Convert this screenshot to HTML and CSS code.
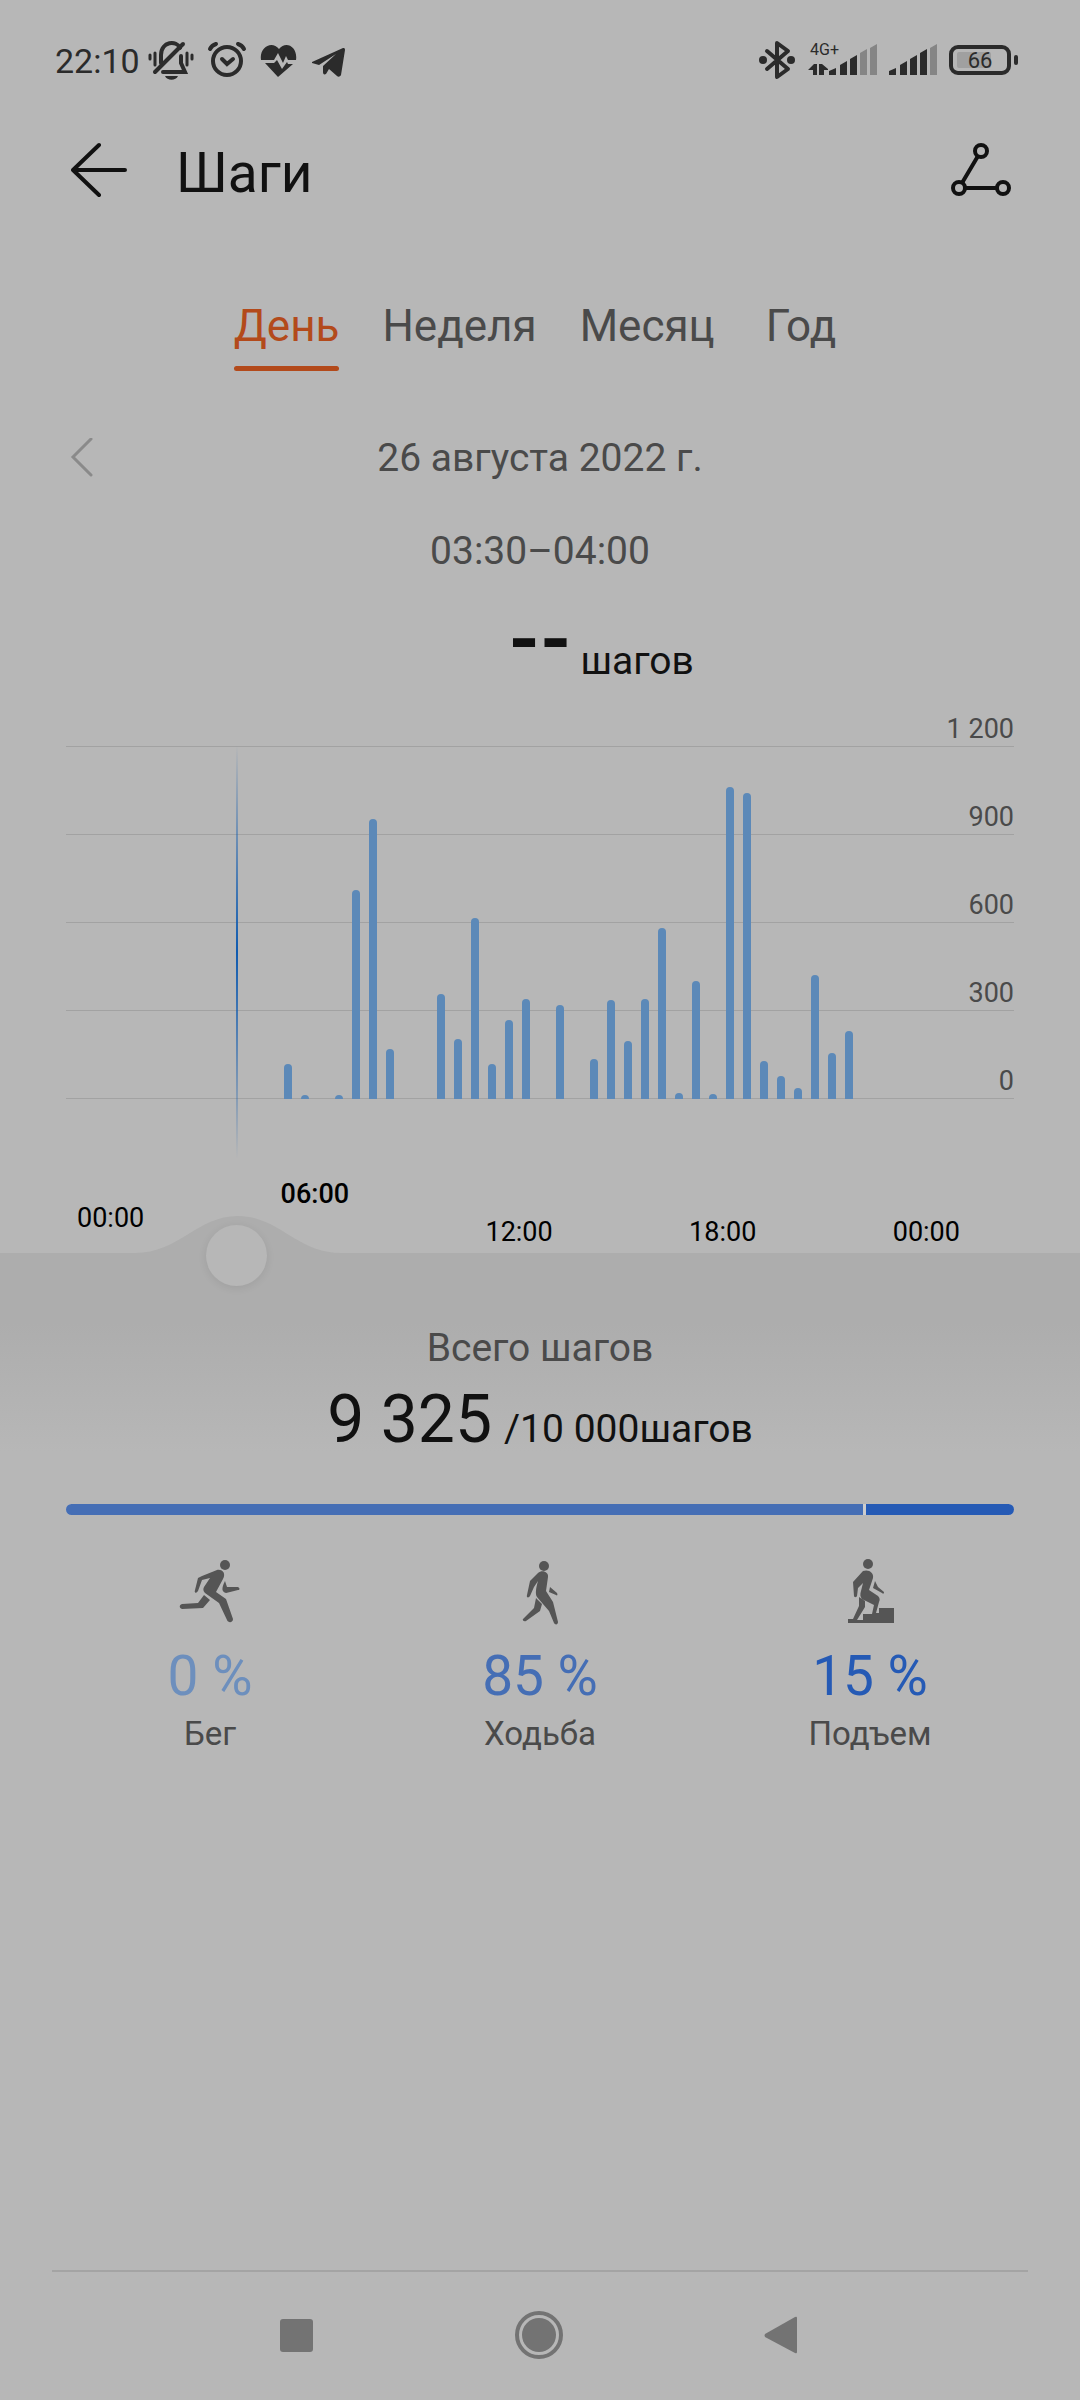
FILE: index.html
```html
<!DOCTYPE html>
<html lang="ru">
<head>
<meta charset="utf-8">
<meta name="viewport" content="width=device-width, initial-scale=1">
<title>Шаги</title>
<link rel="stylesheet" href="styles.css">
</head>
<body>
<div class="screen">
  <div class="status">
    <span class="clock">22:10</span>
    <svg class="status-icons" width="198" height="40" viewBox="0 0 198 40" aria-hidden="true">
      <g fill="none" stroke="#2b2b2b" stroke-width="4" stroke-linecap="round">
        <path d="M7 32 35 4"/><path d="M13 23V15c0-14 16-15 19-7M33 16v7l4 9H15"/>
        <path stroke-width="3" d="M2 15v4M7 13v12M39 13v12M44 15v4"/>
        <circle cx="79" cy="21" r="14"/><path d="m74 19 5 5 6-5"/>
        <path d="M62 9c1-2 3-4 6-5M90 4c3 1 5 3 6 5"/>
      </g>
      <path fill="#2b2b2b" d="M17 36h13c-2 5-11 5-13 0ZM113 20c-2-13 11-20 18-11 7-9 19-2 17 11h-8l-2-4-3 7-5-10-4 7ZM117 23h9l3-3 5 9 5-7 1 2h5l-15 13ZM164 22l31-14c1 0 2 0 2 2l-4 25c-1 2-3 2-4 1l-8-7-3 5c-2 1-3 0-3-2v-6l13-12-17 11-7-2Z"/>
    </svg>
    <svg class="status-right" width="260" height="44" viewBox="0 0 260 44" aria-hidden="true">
      <g fill="none" stroke="#2b2b2b" stroke-width="4" stroke-linejoin="round" stroke-linecap="round"><path d="m9 13 21 18-11 8V5l11 8L9 31"/></g>
      <circle cx="5" cy="22" r="4" fill="#2b2b2b"/><circle cx="33" cy="22" r="4" fill="#2b2b2b"/>
      <text class="network" x="52" y="17">4G+</text>
      <path fill="#2b2b2b" d="M50 32l6-6h3v11h-4v-5zM61 26h3l6 5v1h-4v5h-5zM71 37v-4l7-3v7zM82 37V27l7-4v14zM92 37V21l7-4v20zM131 37v-4l7-3v7zM142 37V27l7-4v14zM152 37V21l7-4v20zM162 37V15l7-4v26z"/>
      <path fill="#858585" d="M102 37V15l7-4v26zM112 37V10l7-4v31zM172 37V10l7-4v31z"/>
      <rect x="199" y="14" width="34" height="16" rx="2" fill="#a0a0a0"/>
      <rect x="193" y="9" width="58" height="26" rx="7" fill="none" stroke="#2b2b2b" stroke-width="4"/>
      <rect x="256" y="17" width="4" height="10" rx="2" fill="#2b2b2b"/>
      <text class="charge" x="222" y="30">66</text>
    </svg>
  </div>

  <header class="bar">
    <button class="icon-button" aria-label="Назад"><svg width="56" height="56" viewBox="0 0 56 56"><path d="M28 3 2 28l26 25M2 28h52" fill="none" stroke="#111" stroke-width="4" stroke-linecap="round" stroke-linejoin="round"/></svg></button>
    <h1 class="title">Шаги</h1>
    <button class="icon-button" aria-label="Поделиться"><svg width="62" height="56" viewBox="0 0 62 56"><g fill="none" stroke="#111" stroke-width="4"><circle cx="31" cy="9" r="6"/><circle cx="9" cy="46" r="6"/><circle cx="53" cy="46" r="6"/><path d="M28 14 12 41M15 46h32"/></g></svg></button>
  </header>

  <nav class="tabs">
    <button class="tab active">День</button>
    <button class="tab">Неделя</button>
    <button class="tab">Месяц</button>
    <button class="tab last">Год</button>
  </nav>

  <div class="date-row">
    <button class="icon-button" aria-label="Предыдущий день"><svg width="24" height="40" viewBox="0 0 24 40"><path d="M21 1 3 19l18 18" fill="none" stroke="#8a8a8a" stroke-width="3" stroke-linecap="round"/></svg></button>
    <span>26 августа 2022 г.</span>
  </div>
  <div class="time-range">03:30–04:00</div>
  <div class="reading"><b class="dashes">--</b><span class="unit">шагов</span></div>

  <section class="chart">
    <div class="grid-lines">
      <div class="line">1 200</div><div class="line">900</div><div class="line">600</div><div class="line">300</div><div class="line zero">0</div>
    </div>
    <div class="bars" id="bars"></div>
    <div class="hours">
      <span class="hour near">00:00</span><span class="hour top">06:00</span><span class="hour">12:00</span><span class="hour">18:00</span><span class="hour">00:00</span>
    </div>
  </section>

  <section class="summary">
    <svg class="hump" width="206" height="38" viewBox="0 0 206 38" aria-hidden="true"><path d="M0 37C44 37 62 0 103 0S162 37 206 37V38H0Z" fill="#adadad"/></svg>
    <input class="scrubber" type="range" min="0" max="47" value="7" aria-label="Время">
    <div class="caption">Всего шагов</div>
    <div class="total"><span class="count">9 325</span><span>/10 000шагов</span></div>
    <div class="split"><i class="walk" style="flex-grow:843"></i><i class="climb" style="flex-grow:157"></i></div>
    <div class="kinds">
      <div class="kind">
        <svg width="64" height="66" viewBox="0 0 64 66" aria-hidden="true"><g fill="#555"><circle cx="47" cy="6" r="5"/><path d="M24 17 39 11c6-1 9 4 6 9l-7 13 10 7 7 20c0 4-5 4-6 1l-8-17-14-10c-2-2-2-4-1-6l6-9-8 2-4 11c-2 3-4 2-3-1l3-12ZM47 22l2 6h11c2 1 2 3 0 3l-12 3c-4-1-5-4-1-12ZM26 36l6 5-7 8-21 1c-3-1-3-4 0-5l16-1Z"/></g></svg>
        <div class="share run-text">0 %</div><div class="name">Бег</div>
      </div>
      <div class="kind">
        <svg width="64" height="66" viewBox="0 0 64 66" aria-hidden="true"><g fill="#555"><circle cx="36" cy="7" r="5"/><path d="M22 22l8-8c4-4 11-1 10 4l-2 14 7 11 5 20c0 3-3 3-4 1l-5-12-12-14c-2-3-1-9 1-16l-4 6-4 9c-1 2-4 2-3-1ZM28 39l6 6-2 7-14 10c-2 1-4-1-3-2l11-11ZM42 28l7 6c1 2 0 3-1 2l-7-3Z"/></g></svg>
        <div class="share walk-text">85 %</div><div class="name">Ходьба</div>
      </div>
      <div class="kind">
        <svg width="64" height="66" viewBox="0 0 64 66" aria-hidden="true"><g fill="#555"><circle cx="30" cy="5" r="5"/><path d="m15 23 10-11c6-2 11 2 10 7l-4 12 9 6c2 2 2 4 1 6l-3 11h3v-5h15v15H10v-4h5l6-13V38l6 4v6l-8 13h6v-6h9l2-9-12-6c-2-2-2-5-1-8l2-8-5 5-1 8c-1 2-3 1-3 0ZM37 22l3 6 6 5c0 2-1 2-2 1l-9-5Z"/></g></svg>
        <div class="share climb-text">15 %</div><div class="name">Подъем</div>
      </div>
    </div>
  </section>

  <footer class="system">
    <button class="icon-button" aria-label="Недавние"><svg width="34" height="50" viewBox="0 0 34 50"><rect y="9" width="33" height="33" rx="3" fill="#737373"/></svg></button>
    <button class="icon-button" aria-label="Домой"><svg width="50" height="50" viewBox="0 0 50 50"><circle cx="25" cy="25" r="22" fill="none" stroke="#737373" stroke-width="4"/><circle cx="25" cy="25" r="17" fill="#737373"/></svg></button>
    <button class="icon-button" aria-label="Назад"><svg width="36" height="50" viewBox="0 0 36 50"><path d="M1 24 31 7q2-1 2 1v34q0 2-2 1L1 27q-1-2 0-3" fill="#737373"/></svg></button>
  </footer>
</div>
<script src="chart.js"></script>
</body>
</html>
```
FILE: styles.css
```css
* { box-sizing: border-box; }
body { margin: 0; background: #b7b7b7; font-family: Roboto, "Liberation Sans", sans-serif; color: #111; }
button { border: 0; padding: 0; background: none; font: inherit; color: inherit; cursor: pointer; }
svg { display: block; flex: none; }
.screen { min-height: 100vh; display: flex; flex-direction: column; }

.status { display: flex; align-items: center; height: 120px; padding: 0 62px 0 55px; color: #2b2b2b; }
.clock { padding-top: 2px; font-size: 34px; line-height: 40px; }
.status-icons { margin-left: 8px; }
.status-right { margin-left: auto; }
.network { font-size: 16px; fill: #2b2b2b; }
.charge { font-size: 22px; text-anchor: middle; fill: #2b2b2b; }

.bar { display: flex; align-items: center; height: 100px; padding: 0 68px 0 71px; }
.title { flex: 1; margin: 6px 0 0 49px; font-size: 55px; line-height: 64px; font-weight: 400; }

.tabs { display: flex; justify-content: center; gap: 43px; margin-top: 76px; padding-right: 10px; font-size: 44px; line-height: 60px; color: #4a4a4a; }
.tab { height: 76px; padding-bottom: 16px; }
.tab.last { margin-left: 8px; }
.tab.active { color: #b34a1b; }
.tab.active::after { content: ""; display: block; height: 5px; margin-top: 10px; margin-bottom: -15px; border-radius: 3px; background: #b34a1b; }

.date-row { display: grid; grid-template-columns: 24px 1fr 24px; align-items: center; height: 60px; margin-top: 56px; padding: 0 70px; text-align: center; font-size: 39px; color: #4a4a4a; }
.time-range { margin-top: 33px; text-align: center; font-size: 39px; line-height: 60px; color: #4a4a4a; }
.reading { display: grid; grid-template-columns: 1fr auto 1fr; gap: 9px; height: 100px; margin-top: 20px; font-size: 39px; line-height: 48px; }
.dashes { grid-column: 2; padding-top: 9px; font-size: 80px; line-height: 60px; }
.unit { padding-top: 36px; }

.chart { display: grid; grid-template-rows: 32px 354px 154px; margin-top: 12px; }
.grid-lines { grid-area: 1 / 1 / 3 / 2; margin: 0 66px; font-size: 27px; line-height: 32px; color: #4a4a4a; text-align: right; }
.line { height: 88px; }
.line::after { content: ""; display: block; height: 1px; margin-top: 1px; background: #a2a2a2; }
.bars { grid-area: 2 / 1 / 4 / 2; display: grid; grid-template-columns: repeat(48, 1fr); height: 414px; margin: 0 155px 0 109px; }
.slot { display: flex; align-items: flex-end; justify-content: center; height: 354px; }
.step { width: 8px; border-radius: 4px 4px 0 0; background: #5c89b8; }
.cursor { width: 2px; height: 414px; align-self: start; flex: none; background: linear-gradient(#0f5bb000, #0f5bb0 50%, #0f5bb000); }
.hours { grid-area: 3 / 1; display: flex; justify-content: space-between; align-items: flex-end; padding: 0 120px 3px 77px; font-size: 27px; line-height: 36px; color: #000; }
.near { margin-bottom: 14px; }
.top { margin-bottom: 38px; font-weight: 500; }

.summary { position: relative; background: linear-gradient(#adadad, #adadad 70px, #b7b7b7 200px); }
.hump { position: absolute; left: 22%; top: -37px; margin-left: -103px; }
.scrubber { position: absolute; top: -29px; left: 87px; width: calc(100% - 219px); height: 62px; margin: 0; appearance: none; background: none; }
.scrubber::-webkit-slider-thumb { appearance: none; width: 61px; height: 61px; border: 0; border-radius: 50%; background: #b7b7b7; box-shadow: 0 2px 8px #00000014; }
.caption { padding-top: 72px; text-align: center; font-size: 39px; line-height: 46px; color: #4a4a4a; }
.total { display: flex; justify-content: center; align-items: baseline; gap: 12px; margin-top: 3px; font-size: 39px; line-height: 92px; }
.count { font-size: 66px; }
.split { display: flex; gap: 3px; height: 11px; margin: 29px 66px 0; border-radius: 6px; overflow: hidden; background: #cdcdcd; }
.walk { background: #456eb5; }
.climb { background: #255ab5; }
.kinds { display: grid; grid-template-columns: repeat(3, 1fr); margin: 44px 45px 0; }
.kind { display: flex; flex-direction: column; align-items: center; }
.share { margin-top: 18px; font-size: 55px; line-height: 66px; }
.name { margin-top: 5px; font-size: 33px; line-height: 40px; color: #4a4a4a; }
.run-text { color: #6d8fbd; }
.walk-text { color: #456eb5; }
.climb-text { color: #255ab5; }

.system { display: flex; justify-content: space-between; align-items: center; height: 130px; margin: auto 52px 0; padding: 0 228px 2px; border-top: 2px solid #a4a4a4; }
```
FILE: chart.js
```js
// Steps per half hour of the day; index 0 is 00:00-00:30.
const steps = [
  0, 0, 0, 0, 0, 0, 0, 0, 0, 0, 119, 14, 0, 14, 707, 950, 171, 0, 0, 355, 202, 614, 120, 267, 339,
  0, 318, 0, 137, 335, 196, 339, 580, 22, 399, 18, 1056, 1036, 130, 77, 39, 421, 157, 230, 0, 0, 0, 0
];
const selected = 7;
const bars = document.getElementById("bars");
steps.forEach((count, i) => {
  const slot = document.createElement("div");
  slot.className = "slot";
  if (count || i === selected) {
    const mark = document.createElement("div");
    mark.className = i === selected ? "cursor" : "step";
    if (i !== selected) mark.style.height = (count / 1200) * 100 + "%";
    slot.append(mark);
  }
  bars.append(slot);
});
```
